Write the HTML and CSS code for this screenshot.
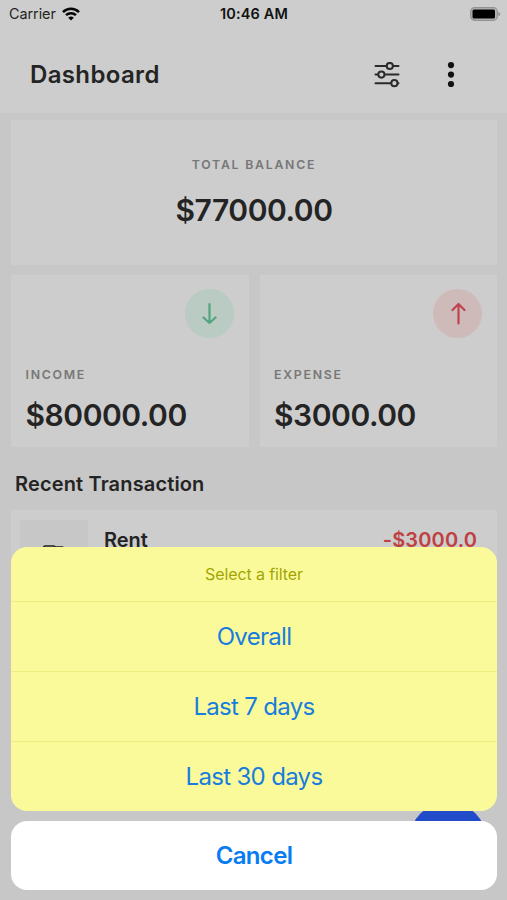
FILE: index.html
```html
<!DOCTYPE html>
<html lang="en">
<head>
<meta charset="utf-8">
<title>Dashboard</title>
<link rel="stylesheet" href="styles.css">
</head>
<body>
<div class="phone">
  <header class="top">
    <div class="status">
      <div class="carrier"><span>Carrier</span>
        <svg class="wifi" width="18" height="14" viewBox="0 0 18 14" fill="none" stroke="#050505" stroke-width="2.5"><path d="M1 5.1a11.4 11.4 0 0 1 16 0M4 8.2a7.2 7.2 0 0 1 10 0"/><path d="M6.2 10.8a4 4 0 0 1 5.6 0L9 13.6z" fill="#050505" stroke="none"/></svg>
      </div>
      <time>10:46 AM</time>
      <svg class="battery" width="31" height="14" viewBox="0 0 31 14"><rect x=".7" y=".7" width="26.6" height="12.6" rx="3.8" fill="#b4b4b4" stroke="#929292" stroke-width="1.2"/><rect x="2.5" y="2.5" width="22.5" height="9" rx="1.5" fill="#000"/><path d="M28.3 4.8q2 .8 2 2.2t-2 2.2z" fill="#929292"/></svg>
    </div>
    <div class="appbar">
      <h1>Dashboard</h1>
      <svg class="sliders" width="26" height="26" viewBox="0 0 26 26" fill="none" stroke="#2b2b2b" stroke-width="2" stroke-linecap="round"><path d="M1.5 4H12M19 4H24.5M1.5 12.6H4M11 12.6H24.5M1.5 21.2H17"/><circle cx="15.8" cy="4" r="3.1"/><circle cx="7.4" cy="12.6" r="3.1"/><circle cx="20.4" cy="21.2" r="3.1"/><path d="M23.8 21.2H24.5"/></svg>
      <svg class="dots" width="8" height="26" viewBox="0 0 8 26" fill="#111"><circle cx="4" cy="3.1" r="3.1"/><circle cx="4" cy="12.6" r="3.1"/><circle cx="4" cy="22" r="3.1"/></svg>
    </div>
  </header>
  <main>
    <section class="card total">
      <div class="label">TOTAL BALANCE</div>
      <div class="amount">$77000.00</div>
    </section>
    <div class="pair">
      <section class="card stat">
        <div class="badge income"><svg width="16" height="24" viewBox="0 0 16 24"><path d="M8.5 2V21M2.5 15.5 8.5 21 14.5 15.5"/></svg></div>
        <div class="label">INCOME</div>
        <div class="amount">$80000.00</div>
      </section>
      <section class="card stat">
        <div class="badge expense"><svg width="16" height="24" viewBox="0 0 16 24"><path d="M8.5 21.5V2.5M2.5 8 8.5 2 14.5 8"/></svg></div>
        <div class="label">EXPENSE</div>
        <div class="amount">$3000.00</div>
      </section>
    </div>
    <h2>Recent Transaction</h2>
    <section class="card row">
      <div class="thumb"><svg width="22" height="22" viewBox="0 0 22 22" fill="none" stroke="#222" stroke-width="1.6"><path d="M1.5 20V2.8Q1.5 1 3.3 1H11.5Q13.3 1 13.3 2.8V20M13.3 2H20.5V20"/></svg></div>
      <div class="name">Rent</div>
      <div class="spent">-$3000.0</div>
    </section>
  </main>
  <div class="fab"></div>
  <div class="sheet">
    <div class="options">
      <div class="title">Select a filter</div>
      <div class="option">Overall</div>
      <div class="option">Last 7 days</div>
      <div class="option">Last 30 days</div>
    </div>
    <div class="cancel">Cancel</div>
  </div>
</div>
</body>
</html>
```
FILE: styles.css
```css
* { box-sizing: border-box; }
body { margin: 0; font-family: Inter, "Liberation Sans", sans-serif; color: #242424; }
svg { display: block; flex: none; }
.phone { position: relative; width: 507px; height: 900px; overflow: hidden; background: #c7c7c7; }
.top { height: 113px; background: #cdcdcd; }
.status { display: grid; grid-template-columns: 1fr auto 1fr; align-items: center; height: 27px; padding: 0 6px 0 9px; font-size: 14.4px; letter-spacing: -.05px; }
.carrier { display: flex; align-items: center; gap: 6px; }
.status time { position: relative; left: -1px; color: #111; font-weight: 600; font-size: 14.5px; letter-spacing: .15px; }
.battery { justify-self: end; }
.appbar { display: flex; align-items: center; height: 95px; padding: 0 52px 0 30px; }
h1 { flex: 1; margin: 0; font-size: 24px; font-weight: 600; line-height: 30px; letter-spacing: .35px; }
.dots { margin-left: 47px; }
main { padding: 7px 10px 0 11px; }
.card { background: #cdcdcd; }
.label { font-size: 12.3px; font-weight: 600; line-height: 16px; letter-spacing: 1.75px; color: #777; }
.amount { font-size: 30px; font-weight: 600; line-height: 36px; letter-spacing: -.45px; }
.total { height: 145px; padding-top: 37px; text-align: center; }
.total .amount { margin-top: 19px; }
.pair { display: grid; grid-template-columns: 1fr 1fr; gap: 11px; margin-top: 10px; }
.stat { height: 172px; padding: 14px 15px 0 14.5px; }
.badge { display: grid; place-items: center; width: 49px; height: 49px; margin-left: auto; border-radius: 50%; }
.badge path { fill: none; stroke: currentColor; stroke-width: 2.2; stroke-linecap: round; stroke-linejoin: round; }
.income { background: #b9cbc2; color: #54a480; }
.expense { background: #cfbaba; color: #bf4450; }
.stat .label { margin-top: 29px; }
.stat .amount { margin-top: 14px; }
h2 { margin: 24px 0 0 4px; font-size: 20px; font-weight: 600; line-height: 26px; letter-spacing: .15px; }
.row { display: flex; height: 84px; margin-top: 13px; padding: 10px 20px 0 9px; font-size: 20px; font-weight: 600; line-height: 24px; }
.thumb { width: 68px; height: 68px; padding: 25px 0 0 22px; background: #c7c7c7; }
.name { flex: 1; padding: 8px 0 0 16px; }
.spent { padding-top: 8px; color: #bf4040; letter-spacing: .15px; }
.fab { position: absolute; left: 409px; top: 802px; width: 78px; height: 78px; border-radius: 50%; background: #214bc9; }
.sheet { position: absolute; left: 11px; top: 547px; width: 486px; text-align: center; color: #087cf1; }
.options { height: 264px; border-radius: 16px; background: #fbfa9b; overflow: hidden; color: #187dde; }
.title { height: 54px; line-height: 55px; font-size: 16px; letter-spacing: -.1px; color: #a3a600; }
.option { height: 70px; border-top: 1px solid #eeed80; font-size: 24px; line-height: 70px; letter-spacing: -.68px; }
.cancel { height: 69px; margin-top: 10px; border-radius: 16px; background: #fff; font-size: 24px; font-weight: 600; line-height: 69px; letter-spacing: -.65px; }
```
